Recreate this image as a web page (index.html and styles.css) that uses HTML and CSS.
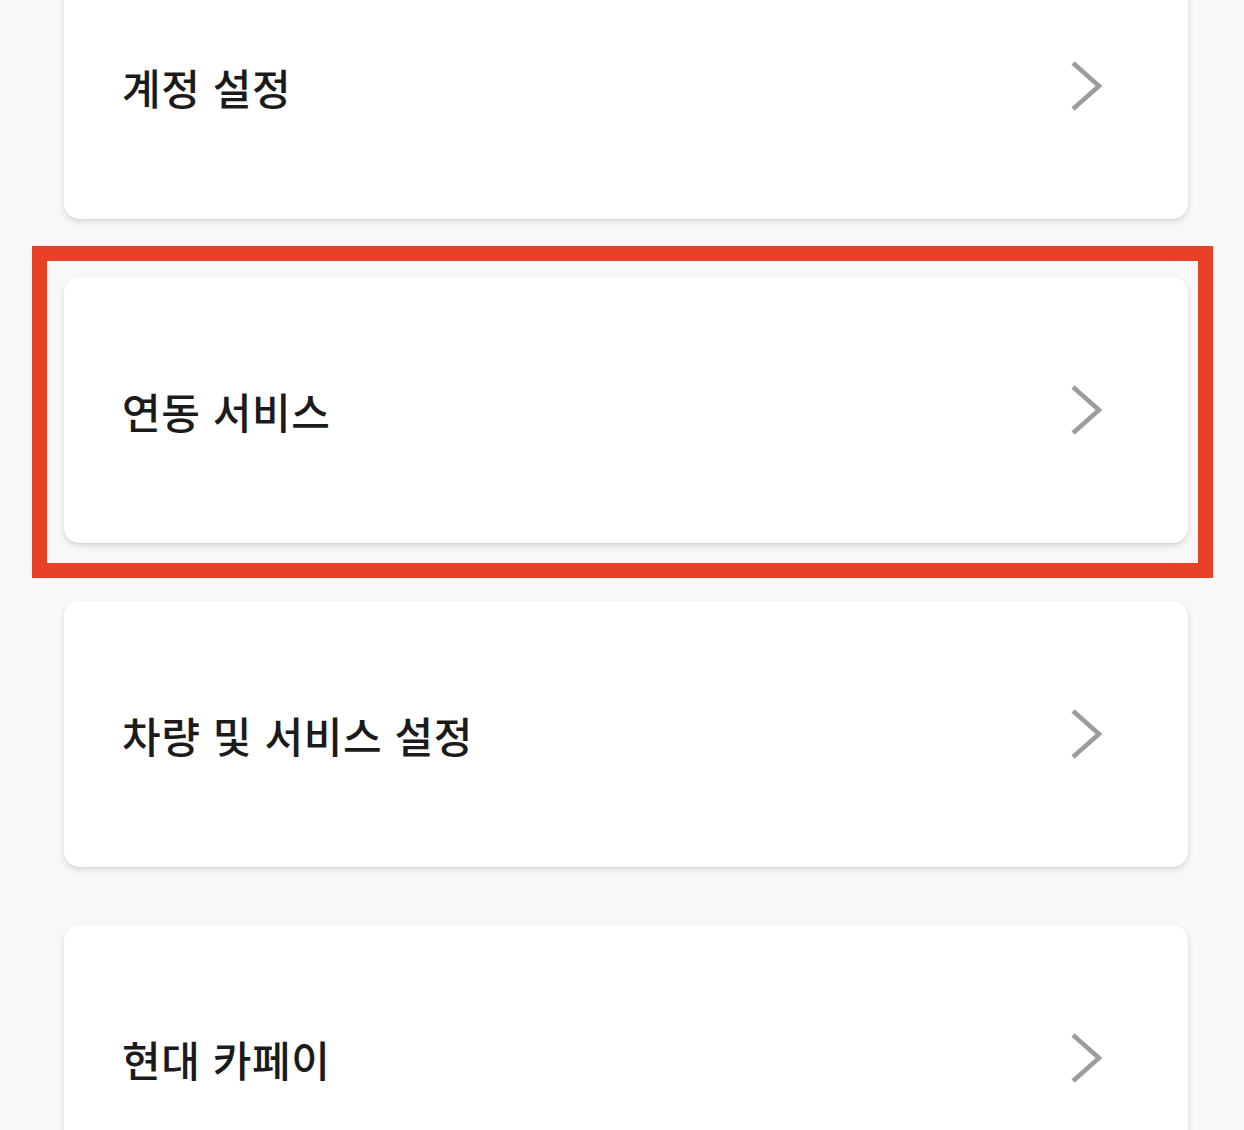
FILE: index.html
```html
<!DOCTYPE html>
<html lang="ko">
<head>
	<meta charset="utf-8">
	<title>설정</title>
	<link rel="stylesheet" href="styles.css">
</head>
<body>
	<!-- Settings menu -->
	<ul class="menu-list">
		<li class="menu-card">
			<span class="menu-label">계정 설정</span>
			<svg class="chevron" viewBox="0 0 34 52" width="34" height="52"><polyline points="3,3 29,26 3,49"/></svg>
		</li>
		<li class="menu-card">
			<span class="menu-label">연동 서비스</span>
			<svg class="chevron" viewBox="0 0 34 52" width="34" height="52"><polyline points="3,3 29,26 3,49"/></svg>
			<!-- highlight frame -->
			<div class="highlight"></div>
		</li>
		<li class="menu-card">
			<span class="menu-label">차량 및 서비스 설정</span>
			<svg class="chevron" viewBox="0 0 34 52" width="34" height="52"><polyline points="3,3 29,26 3,49"/></svg>
		</li>
		<li class="menu-card">
			<span class="menu-label">현대 카페이</span>
			<svg class="chevron" viewBox="0 0 34 52" width="34" height="52"><polyline points="3,3 29,26 3,49"/></svg>
		</li>
	</ul>
</body>
</html>
```

FILE: styles.css
```css
html, body {
	margin: 0;
	padding: 0;
	background-color: #f8f8f8;
	overflow: hidden;
}

body {
	font-family: "Noto Sans CJK KR", "Noto Sans", sans-serif;
	color: #1b1b1b;
}

.menu-list {
	list-style: none;
	margin: -47px 56px 0 64px;
	padding: 0;
	display: flex;
	flex-direction: column;
	gap: 58px;
}

.menu-card {
	position: relative;
	height: 266px;
	background-color: #fff;
	border-radius: 15px;
	box-shadow: 0 3px 6px rgba(0, 0, 0, 0.12), 0 1px 2px rgba(0, 0, 0, 0.06);
	display: flex;
	align-items: center;
	justify-content: space-between;
	padding: 0 84px 0 58px;
}

.menu-label {
	font-size: 42px;
	font-weight: 500;
	letter-spacing: 0.6px;
}

.chevron {
	display: block;
	fill: none;
	stroke: #9c9c9c;
	stroke-width: 4.5;
}

.highlight {
	position: absolute;
	top: -31px;
	left: -32px;
	right: -25px;
	bottom: -35px;
	border: 15px solid #e94127;
	pointer-events: none;
}
```
